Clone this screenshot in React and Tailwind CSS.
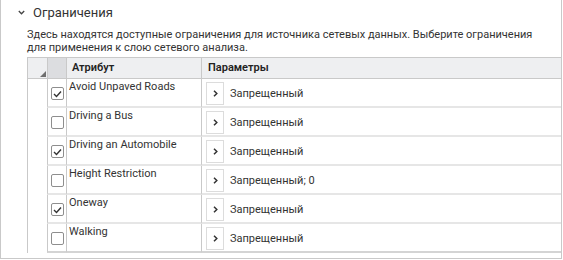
import React from 'react';

const rows = [
  { name: 'Avoid Unpaved Roads', checked: true, value: 'Запрещенный' },
  { name: 'Driving a Bus', checked: false, value: 'Запрещенный' },
  { name: 'Driving an Automobile', checked: true, value: 'Запрещенный' },
  { name: 'Height Restriction', checked: false, value: 'Запрещенный; 0' },
  { name: 'Oneway', checked: true, value: 'Запрещенный' },
  { name: 'Walking', checked: false, value: 'Запрещенный' },
];

const CheckBox = ({ checked }) => (
  <div className="w-[13px] h-[13px] rounded-[2px] border border-[#8e8e8e] bg-white flex items-center justify-center">
    {checked && (
      <svg width="9" height="8" viewBox="0 0 9 8">
        <polyline points="1,4 3.5,6.5 8,1.5" fill="none" stroke="#333" strokeWidth="1.4" />
      </svg>
    )}
  </div>
);

const ExpandButton = () => (
  <div className="w-[18px] h-[23px] border border-[#dcdcdc] bg-white flex items-center justify-center shrink-0">
    <svg width="5" height="7" viewBox="0 0 5 7">
      <polyline points="1,0.8 3.8,3.5 1,6.2" fill="none" stroke="#333" strokeWidth="1.5" />
    </svg>
  </div>
);

const Row = ({ row, last }) => {
  const line = last ? 'border-b-2 border-b-[#d4d4d4]' : 'border-b-2 border-b-[#e6e6e6]';
  return (
    <div className="flex h-[29px]">
      <div className="w-[19px] bg-white" />
      <div className={`w-[19px] border-l border-[#c9c9c9] pl-[3px] pt-[8px] ${line}`}>
        <CheckBox checked={row.checked} />
      </div>
      <div className={`w-[135px] border-l border-[#c9c9c9] pl-[2px] pt-[1px] leading-[14px] whitespace-nowrap ${line}`}>
        {row.name}
      </div>
      <div className={`flex-1 border-l border-[#c9c9c9] pl-[4px] pt-[3px] flex items-start gap-[6px] ${line}`}>
        <ExpandButton />
        <span className="leading-[23px] whitespace-nowrap">{row.value}</span>
      </div>
    </div>
  );
};

export default function App() {
  return (
    <div className="w-[563px] h-[260px] bg-white text-[11px] text-[#333]" style={{ fontFamily: 'Roboto, "Open Sans", sans-serif' }}>
      <div className="w-[562px] h-[259px] border-x border-b border-[#c9c9c9] overflow-hidden">
        <div className="h-[25px] flex items-center pl-[17px]">
          <svg width="7" height="5" viewBox="0 0 7 5" className="mr-[8px]">
            <polyline points="0.8,1 3.5,3.8 6.2,1" fill="none" stroke="#444" strokeWidth="1.3" />
          </svg>
          <span className="text-[13px]">Ограничения</span>
        </div>
        <div className="pl-[26px] pt-[3px] leading-[13px] whitespace-nowrap">
          <div>Здесь находятся доступные ограничения для источника сетевых данных. Выберите ограничения</div>
          <div>для применения к слою сетевого анализа.</div>
        </div>
        <div className="ml-[26px] mt-[3px] border-t border-l border-[#c9c9c9]">
          <div className="flex h-[21px] border-b border-[#c9c9c9] bg-[#eeeff1] font-semibold text-[#222]">
            <div className="w-[19px] relative">
              <svg width="6" height="6" viewBox="0 0 6 6" className="absolute right-[1px] bottom-[1px]">
                <polygon points="6,0 6,6 0,6" fill="#6f6f6f" />
              </svg>
            </div>
            <div className="w-[19px] border-l border-[#c9c9c9] bg-[#dcdde0]" />
            <div className="w-[135px] border-l border-[#c9c9c9] pl-[5px] flex items-center">Атрибут</div>
            <div className="flex-1 border-l border-[#c9c9c9] pl-[6px] flex items-center">Параметры</div>
          </div>
          {rows.map((row, i) => (
            <Row key={row.name} row={row} last={i === rows.length - 1} />
          ))}
        </div>
      </div>
    </div>
  );
}
